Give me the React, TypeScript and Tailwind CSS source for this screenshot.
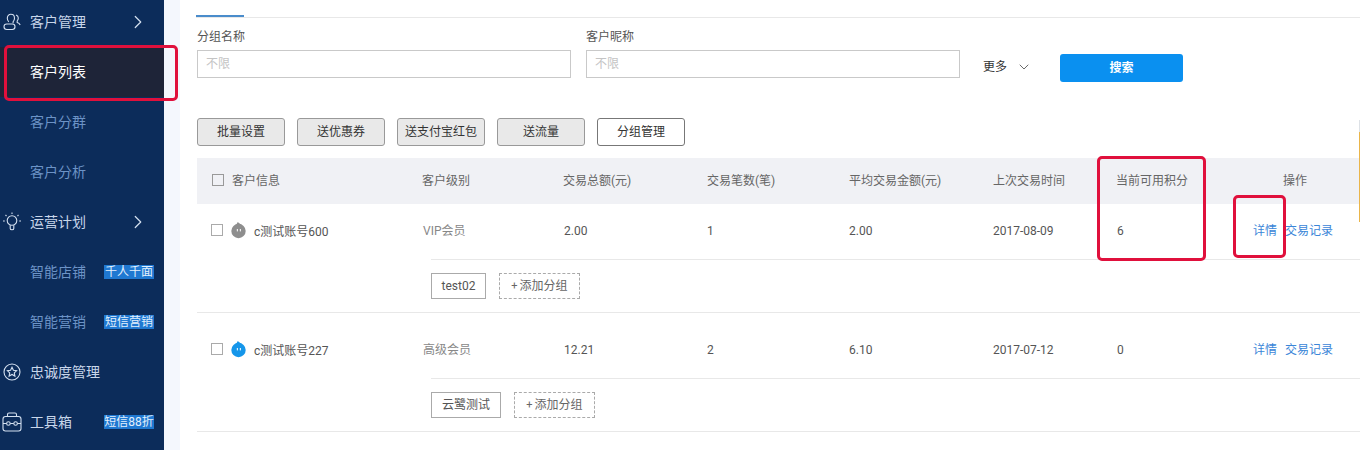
import React from "react";
import { ChevronRight, ChevronDown } from "lucide-react";

const FONT = "font-['Roboto','Noto_Sans_CJK_SC',sans-serif]";

function UserIcon() {
  return (
    <svg width="18" height="18" viewBox="0 0 18 18" fill="none" stroke="currentColor" strokeWidth="1.100">
      <path d="M5.800 8.800C4.800 7.800 4.300 6.500 4.300 5.200c0-2.200 1.500-3.900 3.600-3.900s3.600 1.700 3.600 3.900c0 1.300-.5 2.600-1.400 3.600v1.400" />
      <rect x="1" y="11" width="11" height="5.500" rx="2.700" />
      <path d="M13 2c1.400.4 2.300 1.600 2.300 3.100 0 1.100-.4 2.100-1.100 2.900v1.600c1.200.4 2.400 1.200 3 2.400" />
    </svg>
  );
}
function BulbIcon() {
  return (
    <svg width="20" height="20" viewBox="0 0 20 20" fill="none" stroke="currentColor" strokeWidth="1.100">
      <circle cx="10" cy="8.500" r="4.800" />
      <path d="M8.200 13.200v3.300c0 .8.700 1.300 1.800 1.300s1.800-.5 1.800-1.300v-3.300M10 .5v1.400M3.500 3l1 1M16.500 3l-1 1M1 9h1.800M17.200 9H19" />
    </svg>
  );
}
function StarIcon() {
  return (
    <svg width="18" height="18" viewBox="0 0 18 18" fill="none" stroke="currentColor" strokeWidth="1.100">
      <circle cx="9" cy="9" r="8" />
      <path d="M9 4.300l1.400 3 3.200.4-2.300 2.200.6 3.200L9 11.500l-2.900 1.600.6-3.200-2.300-2.200 3.200-.4z" />
    </svg>
  );
}
function BoxIcon() {
  return (
    <svg width="20" height="20" viewBox="0 0 20 20" fill="none" stroke="currentColor" strokeWidth="1.100">
      <rect x="1" y="4.500" width="18" height="14.500" rx="2.500" />
      <path d="M5.500 4.500V2.500c0-.9.600-1.500 1.500-1.500h6c.9 0 1.500.6 1.500 1.500v2M1 11.500h3.500M8.300 11.500h3.400M15.500 11.500H19" />
      <circle cx="6.400" cy="11.500" r="1.800" />
      <circle cx="13.600" cy="11.500" r="1.800" />
    </svg>
  );
}
function Avatar({ color }: { color: string }) {
  return (
    <svg width="16" height="17" viewBox="0 0 16 17">
      <circle cx="7.500" cy="9" r="7.200" fill={color} />
      <path d="M5 3L6.800 0L10.500 3z" fill={color} />
      <rect x="5.800" y="7" width="1.200" height="2.400" fill="#fff" opacity="0.85" />
      <rect x="8.800" y="7" width="1.200" height="2.400" fill="#fff" opacity="0.85" />
    </svg>
  );
}

function NavTop({ icon, label, chevron, badge }: { icon: React.ReactNode; label: string; chevron?: boolean; badge?: string }) {
  return (
    <div className="h-[50px] flex items-center text-[#c8d6ea] text-[14px]">
      <div className="w-[24px] mr-[6px] flex justify-center shrink-0 text-[#d4e0f0]">{icon}</div>
      <span>{label}</span>
      {chevron && <ChevronRight className="ml-auto mr-[15px] text-[#d4e0f0]" size={22} strokeWidth={1.300} />}
      {badge && <Badge text={badge} />}
    </div>
  );
}
function Badge({ text }: { text: string }) {
  return (
    <span className="ml-auto mr-[10px] w-[50px] h-[14px] bg-[#1f78d1] text-[#e4f0fc] text-[12px] leading-[14px] text-center whitespace-nowrap">
      {text}
    </span>
  );
}
function NavSub({ label, active, badge }: { label: string; active?: boolean; badge?: string }) {
  return (
    <div className={`h-[50px] flex items-center pl-[30px] text-[14px] ${active ? "bg-[#1e2438] text-white" : "text-[#6c93c6]"}`}>
      <span>{label}</span>
      {badge && <Badge text={badge} />}
    </div>
  );
}

function Field({ label, width }: { label: string; width: string }) {
  return (
    <div className={width}>
      <div className="h-[18px] leading-[18px] text-[12px] text-[#555]">{label}</div>
      <input
        readOnly
        placeholder="不限"
        className="mt-[4px] block w-full h-[28px] border border-[#c9c9c9] px-[8px] text-[12px] outline-none placeholder:text-[#c4c4c4]"
      />
    </div>
  );
}

function ActionBtn({ label, white }: { label: string; white?: boolean }) {
  return (
    <div
      className={`w-[88px] h-[28px] flex items-center justify-center rounded-[3px] border text-[12px] text-[#333] ${
        white ? "bg-white border-[#777]" : "bg-[#e9e9e9] border-[#999]"
      }`}
    >
      {label}
    </div>
  );
}

const COLS = "grid grid-cols-[225px_141px_144px_142px_144px_123px_137px_1fr]";

function Row({
  name, avatar, level, total, count, avg, date, points, tag, tagW, top,
}: {
  name: string; avatar: string; level: string; total: string; count: string; avg: string; date: string; points: string; tag: string; tagW: string; top: string;
}) {
  return (
    <div className="border-b border-[#e8e8e8]">
      <div className={top}>
        <div className={`${COLS} h-[55px] pb-[2px] items-center text-[12px] text-[#555]`}>
          <div className="flex items-center pl-[14px]">
            <span className="w-[12px] h-[12px] border border-[#aaa] shrink-0 -mt-[2px]" />
            <span className="ml-[8px] flex"><Avatar color={avatar} /></span>
            <span className="ml-[7px] mt-[3px]">{name}</span>
          </div>
          <div className="pl-[1px] text-[#888]">{level}</div>
          <div className="pl-[1px]">{total}</div>
          <div>{count}</div>
          <div>{avg}</div>
          <div>{date}</div>
          <div className="pl-[1px]">{points}</div>
          <div className="flex gap-[8px] text-[#3b86d8]">
            <span>详情</span>
            <span>交易记录</span>
          </div>
        </div>
      </div>
      <div className="ml-[234px] border-t border-[#e8e8e8] h-[53px] flex items-start pt-[13px] gap-[13px] text-[12px] text-[#555]">
        <div className={`${tagW} h-[26px] border border-[#aaa] flex items-center justify-center`}>{tag}</div>
        <div className="w-[81px] h-[26px] border border-dashed border-[#aaa] flex items-center justify-center text-[#666]">
          <span className="text-[11px] mr-[2px]">+</span>添加分组
        </div>
      </div>
    </div>
  );
}

export default function App() {
  return (
    <div className={`${FONT} relative w-[1360px] h-[450px] overflow-hidden bg-white flex`}>
      <aside className="w-[164px] shrink-0 bg-[#0c2c5a]">
        <div className="-mt-[3px]">
          <NavTop icon={<UserIcon />} label="客户管理" chevron />
          <NavSub label="客户列表" active />
          <NavSub label="客户分群" />
          <NavSub label="客户分析" />
          <NavTop icon={<BulbIcon />} label="运营计划" chevron />
          <NavSub label="智能店铺" badge="千人千面" />
          <NavSub label="智能营销" badge="短信营销" />
          <NavTop icon={<StarIcon />} label="忠诚度管理" />
          <NavTop icon={<BoxIcon />} label="工具箱" badge="短信88折" />
        </div>
      </aside>
      <div className="w-[16px] shrink-0 bg-[#f4f7fd]" />
      <main className="flex-1 min-w-0 pl-[17px]">
        <div className="h-[18px] border-b border-[#e8e8e8] flex items-end -ml-[1px]">
          <div className="w-[48px] h-[2px] bg-[#4a8ccb]" />
        </div>
        <div className="flex items-start mt-[10px]">
          <Field label="分组名称" width="w-[374px]" />
          <div className="w-[15px]" />
          <Field label="客户昵称" width="w-[374px]" />
          <div className="ml-[23px] mt-[26px] w-[77px] flex items-center text-[12px] text-[#333] h-[26px]">
            <span>更多</span>
            <ChevronDown className="ml-[9px] text-[#444]" size={16} strokeWidth={1.200} />
          </div>
          <div className="mt-[26px] w-[123px] h-[28px] rounded-[3px] bg-[#0a90f0] text-white text-[12px] font-bold flex items-center justify-center">
            搜索
          </div>
        </div>
        <div className="mt-[36px] flex gap-[12px]">
          <ActionBtn label="批量设置" />
          <ActionBtn label="送优惠券" />
          <ActionBtn label="送支付宝红包" />
          <ActionBtn label="送流量" />
          <ActionBtn label="分组管理" white />
        </div>
        <div className={`${COLS} mt-[12px] h-[46px] items-center bg-[#f0f1f5] text-[12px] text-[#666]`}>
          <div className="flex items-center pl-[15px]">
            <span className="w-[12px] h-[12px] border border-[#999] -mt-[2px]" />
            <span className="ml-[8px]">客户信息</span>
          </div>
          <div>客户级别</div>
          <div>交易总额(元)</div>
          <div>交易笔数(笔)</div>
          <div>平均交易金额(元)</div>
          <div>上次交易时间</div>
          <div>当前可用积分</div>
          <div className="pl-[30px]">操作</div>
        </div>
        <Row name="c测试账号600" avatar="#8e8e8e" level="VIP会员" total="2.00" count="1" avg="2.00" date="2017-08-09" points="6" tag="test02" tagW="w-[55px]" top="" />
        <Row name="c测试账号227" avatar="#1596ea" level="高级会员" total="12.21" count="2" avg="6.10" date="2017-07-12" points="0" tag="云鹭测试" tagW="w-[70px]" top="pt-[10px]" />
      </main>
      <div className="absolute left-[1359px] top-[120px] w-[1px] h-[12px] bg-[#dde1e6]" />
      <div className="absolute left-[1359px] top-[132px] w-[1px] h-[90px] bg-[#eab54a]" />
      <div className="absolute left-[4px] top-[45px] w-[174px] h-[56px] border-[3px] border-[#e0103c] rounded-[5px]" />
      <div className="absolute left-[1097px] top-[156px] w-[109px] h-[105px] border-[3px] border-[#e0103c] rounded-[5px]" />
      <div className="absolute left-[1233px] top-[195px] w-[53px] h-[63px] border-[3px] border-[#e0103c] rounded-[5px]" />
    </div>
  );
}
